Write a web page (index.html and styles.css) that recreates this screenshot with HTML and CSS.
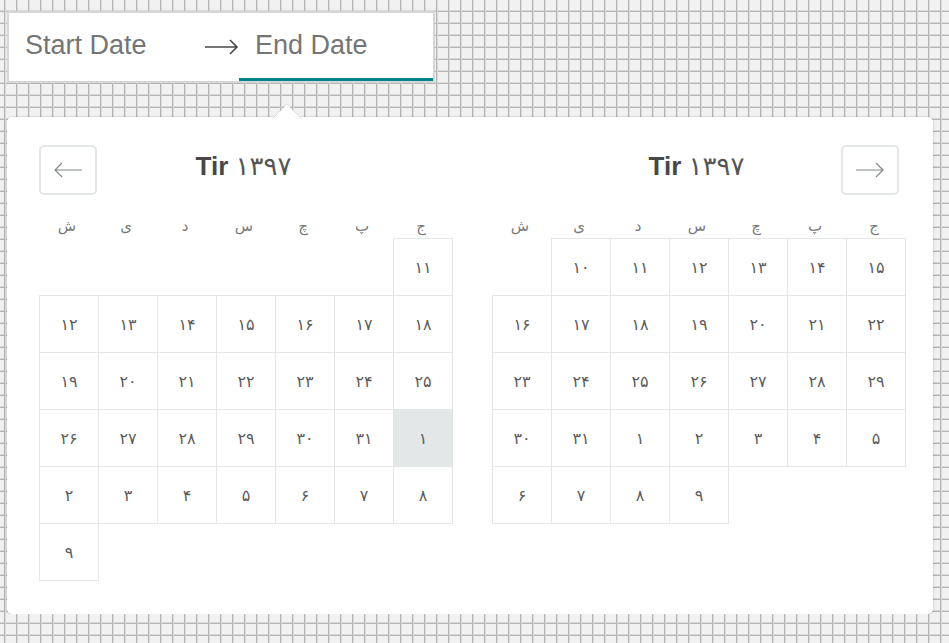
FILE: index.html
```html
<!DOCTYPE html>
<html lang="en">
<head>
<meta charset="utf-8">
<title>Date range picker</title>
<link rel="stylesheet" href="styles.css">
</head>
<body>
<div class="page">
  <div class="picker">
    <div class="range-input">
      <div class="date-input">Start Date</div>
      <div class="range-arrow">
        <svg width="34" height="16" viewBox="0 0 34 16"><path d="M0 8H32M25 1L32 8L25 15" fill="none" stroke="#484848" stroke-width="1.6"/></svg>
      </div>
      <div class="date-input is-focused">End Date</div>
    </div>
    <svg class="fang" width="30" height="15" viewBox="0 0 30 15"><path d="M0 15L15 0L30 15Z" fill="#fff"/><path d="M0 15L15 0L30 15" fill="none" stroke="rgba(0,0,0,0.1)" stroke-width="1"/></svg>
    <div class="calendar">
      <div class="month">
        <div class="month-header">
          <button class="nav-btn nav-prev" type="button" aria-label="Previous month">
            <svg width="28" height="16" viewBox="0 0 28 16"><path d="M1 8H28M8 1L1 8L8 15" fill="none" stroke="#82888a" stroke-width="1.2"/></svg>
          </button>
          <div class="month-title">Tir <span class="year">۱۳۹۷</span></div>
        </div>
        <div class="weekdays"><span>ش</span><span>ی</span><span>د</span><span>س</span><span>چ</span><span>پ</span><span>ج</span></div>
        <div class="days">
          <div class="day col-7">۱۱</div>
          <div class="day">۱۲</div><div class="day">۱۳</div><div class="day">۱۴</div><div class="day">۱۵</div><div class="day">۱۶</div><div class="day">۱۷</div><div class="day">۱۸</div>
          <div class="day">۱۹</div><div class="day">۲۰</div><div class="day">۲۱</div><div class="day">۲۲</div><div class="day">۲۳</div><div class="day">۲۴</div><div class="day">۲۵</div>
          <div class="day">۲۶</div><div class="day">۲۷</div><div class="day">۲۸</div><div class="day">۲۹</div><div class="day">۳۰</div><div class="day">۳۱</div><div class="day is-hovered">۱</div>
          <div class="day">۲</div><div class="day">۳</div><div class="day">۴</div><div class="day">۵</div><div class="day">۶</div><div class="day">۷</div><div class="day">۸</div>
          <div class="day">۹</div>
        </div>
      </div>
      <div class="month">
        <div class="month-header">
          <div class="month-title">Tir <span class="year">۱۳۹۷</span></div>
          <button class="nav-btn nav-next" type="button" aria-label="Next month">
            <svg width="28" height="16" viewBox="0 0 28 16"><path d="M0 8H27M20 1L27 8L20 15" fill="none" stroke="#82888a" stroke-width="1.2"/></svg>
          </button>
        </div>
        <div class="weekdays"><span>ش</span><span>ی</span><span>د</span><span>س</span><span>چ</span><span>پ</span><span>ج</span></div>
        <div class="days">
          <div class="day col-2">۱۰</div><div class="day">۱۱</div><div class="day">۱۲</div><div class="day">۱۳</div><div class="day">۱۴</div><div class="day">۱۵</div>
          <div class="day">۱۶</div><div class="day">۱۷</div><div class="day">۱۸</div><div class="day">۱۹</div><div class="day">۲۰</div><div class="day">۲۱</div><div class="day">۲۲</div>
          <div class="day">۲۳</div><div class="day">۲۴</div><div class="day">۲۵</div><div class="day">۲۶</div><div class="day">۲۷</div><div class="day">۲۸</div><div class="day">۲۹</div>
          <div class="day">۳۰</div><div class="day">۳۱</div><div class="day">۱</div><div class="day">۲</div><div class="day">۳</div><div class="day">۴</div><div class="day">۵</div>
          <div class="day">۶</div><div class="day">۷</div><div class="day">۸</div><div class="day">۹</div>
        </div>
      </div>
    </div>
  </div>
</div>
</body>
</html>
```
FILE: styles.css
```css
html {
  background-color: #f1f1f1;
  background-image:
    linear-gradient(to right, transparent 4px, #b4b4b4 4px, #b4b4b4 5px, #dadada 5px, #dadada 6px, transparent 6px),
    linear-gradient(to bottom, transparent 10px, #dadada 10px, #dadada 11px, #b4b4b4 11px, #b4b4b4 12px, transparent 12px);
  background-size: 12px 12px;
  min-height: 100%;
}

body {
  margin: 0;
  font-family: "Liberation Sans", "DejaVu Sans", sans-serif;
  color: #484848;
}

.page {
  padding: 11px 0 0 7px;
}

.picker {
  position: relative;
  width: 926px;
}

.range-input {
  display: flex;
  width: max-content;
  background: #fff;
  border: 2px solid #d6d6d6;
}

.date-input {
  box-sizing: border-box;
  width: 194px;
  height: 68px;
  padding: 14px 16px 0;
  font-size: 27px;
  line-height: 36px;
  color: #757575;
  border-bottom: 3px solid transparent;
}

.date-input.is-focused {
  border-bottom-color: #008489;
}

.range-arrow {
  width: 36px;
  display: flex;
  align-items: center;
  justify-content: center;
  padding-left: 1px;
  box-sizing: border-box;
}

.range-arrow svg {
  display: block;
}

.fang {
  position: absolute;
  top: 93px;
  left: 265px;
  z-index: 2;
}

.calendar {
  box-sizing: border-box;
  width: 926px;
  margin-top: 34px;
  padding: 28px 28px 34px 32px;
  display: flex;
  align-items: flex-start;
  gap: 40px;
  background: #fff;
  border-radius: 5px;
  box-shadow: 0 3px 9px rgba(0, 0, 0, 0.05), 0 0 0 1px rgba(0, 0, 0, 0.08);
}

.month {
  width: 413px;
}

.month-header {
  display: grid;
  grid-template-columns: 64px 1fr 64px;
  height: 50px;
}

.nav-btn {
  box-sizing: border-box;
  width: 58px;
  height: 50px;
  padding: 0;
  margin: 0;
  background: #fff;
  border: 2px solid #e4e7e7;
  border-radius: 5px;
  display: flex;
  align-items: center;
  justify-content: center;
}

.nav-btn svg {
  display: block;
}

.nav-prev {
  grid-column: 1;
  justify-self: start;
}

.nav-next {
  grid-column: 3;
  justify-self: end;
  margin-right: 6px;
}

.month-title {
  grid-column: 2;
  grid-row: 1;
  text-align: center;
  font-size: 26px;
  font-weight: bold;
  line-height: 30px;
  padding-top: 6px;
  padding-right: 4px;
  color: #484848;
}

.year {
  font-weight: normal;
  letter-spacing: 1px;
  color: #555;
}

.weekdays {
  display: grid;
  grid-template-columns: repeat(7, 59px);
  margin-top: 21px;
  height: 22px;
  font-size: 15px;
  line-height: 20px;
  color: #7a7a7a;
  text-align: center;
}

.weekdays span {
  padding-right: 3px;
}

.days {
  display: grid;
  grid-template-columns: repeat(7, 59px);
  grid-auto-rows: 57px;
  font-size: 16px;
  color: #5c5c5c;
}

.day {
  box-sizing: border-box;
  width: 60px;
  height: 58px;
  border: 1px solid #e4e7e7;
  display: flex;
  align-items: center;
  justify-content: center;
}

.day.is-hovered {
  background: #e4e7e7;
}

.col-2 {
  grid-column-start: 2;
}

.col-7 {
  grid-column-start: 7;
}
```
